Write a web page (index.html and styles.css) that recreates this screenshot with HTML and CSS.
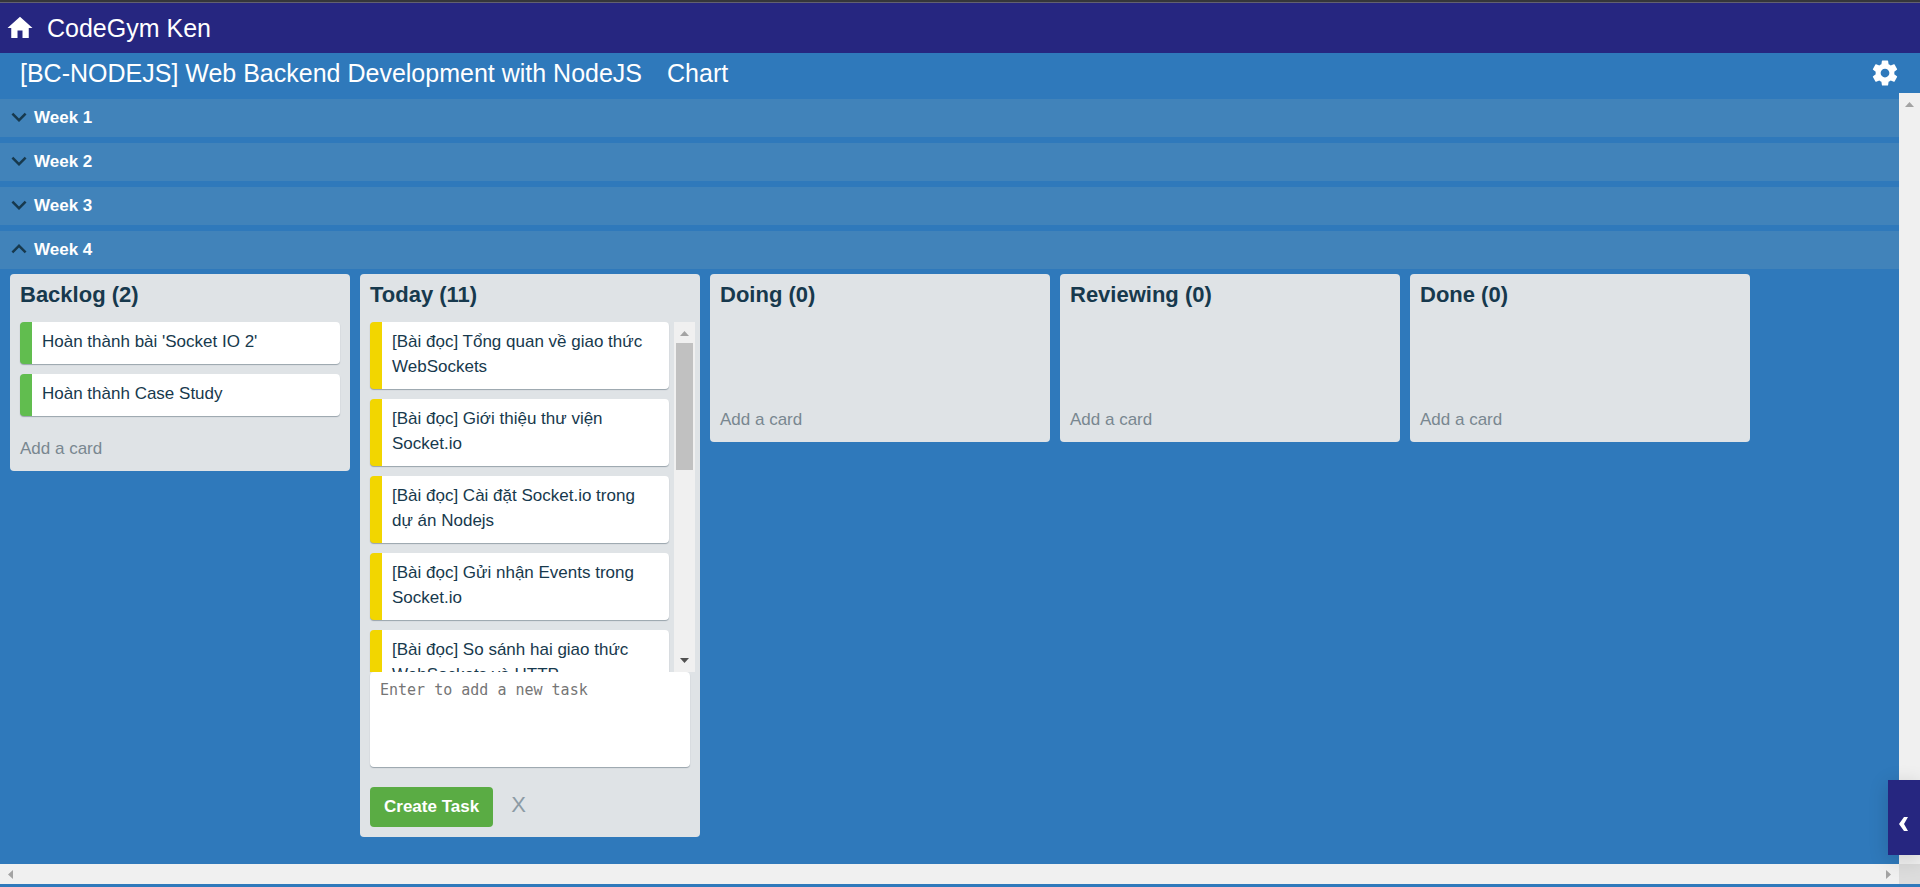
FILE: index.html
```html
<!DOCTYPE html>
<html lang="vi">
<head>
<meta charset="utf-8">
<meta name="viewport" content="width=device-width, initial-scale=1">
<title>CodeGym Ken</title>
<link rel="stylesheet" href="styles.css">
</head>
<body>
<svg class="sprite" width="0" height="0" aria-hidden="true">
  <symbol id="down" viewBox="0 0 24 24"><path d="M16.59 8.59L12 13.17 7.41 8.59 6 10l6 6 6-6z"/></symbol>
  <symbol id="up" viewBox="0 0 24 24"><path d="M12 8l-6 6 1.41 1.41L12 10.83l4.59 4.58L18 14z"/></symbol>
</svg>
<div class="app">
  <header class="topbar">
    <a class="home" href="#">
      <svg class="icon" viewBox="0 0 24 24" aria-hidden="true"><path d="M10 20v-6h4v6h5v-8h3L12 3 2 12h3v8z"/></svg>
      <span>CodeGym Ken</span>
    </a>
  </header>
  <nav class="boardbar">
    <a href="#">[BC-NODEJS] Web Backend Development with NodeJS</a>
    <a href="#">Chart</a>
    <button class="settings" type="button" aria-label="Settings">
      <svg class="icon" viewBox="0 0 24 24" aria-hidden="true"><path d="M19.43 12.98c.04-.32.07-.64.07-.98s-.03-.66-.07-.98l2.11-1.65c.19-.15.24-.42.12-.64l-2-3.46c-.12-.22-.39-.3-.61-.22l-2.49 1c-.52-.4-1.08-.73-1.69-.98l-.38-2.65C14.46 2.18 14.25 2 14 2h-4c-.25 0-.46.18-.49.42l-.38 2.65c-.61.25-1.17.59-1.69.98l-2.49-1c-.23-.09-.49 0-.61.22l-2 3.46c-.13.22-.07.49.12.64l2.11 1.65c-.04.32-.07.65-.07.98s.03.66.07.98l-2.11 1.65c-.19.15-.24.42-.12.64l2 3.46c.12.22.39.3.61.22l2.49-1c.52.4 1.08.73 1.69.98l.38 2.65c.03.24.24.42.49.42h4c.25 0 .46-.18.49-.42l.38-2.65c.61-.25 1.17-.59 1.69-.98l2.49 1c.23.09.49 0 .61-.22l2-3.46c.12-.22.07-.49-.12-.64l-2.11-1.65zM12 15.5c-1.93 0-3.5-1.57-3.5-3.5s1.57-3.5 3.5-3.5 3.5 1.57 3.5 3.5-1.57 3.5-3.5 3.5z"/></svg>
    </button>
  </nav>
  <div class="viewport">
    <main class="board">
      <div class="weeks">
        <button class="week" type="button" aria-expanded="false"><svg class="icon" aria-hidden="true"><use href="#down"/></svg>Week 1</button>
        <button class="week" type="button" aria-expanded="false"><svg class="icon" aria-hidden="true"><use href="#down"/></svg>Week 2</button>
        <button class="week" type="button" aria-expanded="false"><svg class="icon" aria-hidden="true"><use href="#down"/></svg>Week 3</button>
        <button class="week" type="button" aria-expanded="true"><svg class="icon" aria-hidden="true"><use href="#up"/></svg>Week 4</button>
      </div>
      <div class="lists">
        <section class="list">
          <h2>Backlog (2)</h2>
          <ul class="cards">
            <li class="card green">Hoàn thành bài 'Socket IO 2'</li>
            <li class="card green">Hoàn thành Case Study</li>
          </ul>
          <button class="add" type="button">Add a card</button>
        </section>
        <section class="list">
          <h2>Today (11)</h2>
          <div class="scroller">
            <ul class="cards">
              <li class="card yellow">[Bài đọc] Tổng quan về giao thức WebSockets</li>
              <li class="card yellow">[Bài đọc] Giới thiệu thư viện Socket.io</li>
              <li class="card yellow">[Bài đọc] Cài đặt Socket.io trong dự án Nodejs</li>
              <li class="card yellow">[Bài đọc] Gửi nhận Events trong Socket.io</li>
              <li class="card yellow">[Bài đọc] So sánh hai giao thức WebSockets và HTTP</li>
            </ul>
            <div class="vbar" aria-hidden="true">
              <svg class="arrow" viewBox="0 0 21 21"><path fill="#a3a3a3" d="M6 14h9l-4.500-5z"/></svg>
              <span class="thumb"></span>
              <svg class="arrow last" viewBox="0 0 21 21"><path fill="#505050" d="M6 7h9l-4.500 5z"/></svg>
            </div>
          </div>
          <form class="composer">
            <textarea aria-label="New task" placeholder="Enter to add a new task"></textarea>
            <div class="actions">
              <button class="create" type="button">Create Task</button>
              <button class="cancel" type="button" aria-label="Cancel">X</button>
            </div>
          </form>
        </section>
        <section class="list">
          <h2>Doing (0)</h2>
          <ul class="cards"></ul>
          <button class="add" type="button">Add a card</button>
        </section>
        <section class="list">
          <h2>Reviewing (0)</h2>
          <ul class="cards"></ul>
          <button class="add" type="button">Add a card</button>
        </section>
        <section class="list">
          <h2>Done (0)</h2>
          <ul class="cards"></ul>
          <button class="add" type="button">Add a card</button>
        </section>
      </div>
    </main>
    <div class="vbar" aria-hidden="true">
      <svg class="arrow" viewBox="0 0 21 21"><path fill="#a3a3a3" d="M6 14h9l-4.500-5z"/></svg>
    </div>
    <div class="hbar" aria-hidden="true">
      <svg class="arrow" viewBox="0 0 21 21"><path fill="#a3a3a3" d="M13 6v9l-5-4.500z"/></svg>
      <svg class="arrow" viewBox="0 0 21 21"><path fill="#a3a3a3" d="M8 6v9l5-4.500z"/></svg>
    </div>
    <div class="corner" aria-hidden="true"></div>
    <button class="drawer" type="button" aria-label="Open panel">
      <svg viewBox="0 0 10 14" width="10" height="14" aria-hidden="true"><path d="M5 0h4L5 7l4 7H5L0 7z"/></svg>
    </button>
  </div>
</div>
</body>
</html>
```
FILE: styles.css
```css
* { box-sizing: border-box; }

body {
  margin: 0;
  background: #2f79bb;
  color: #17394d;
  font-family: "Liberation Sans", Arial, sans-serif;
  font-size: 17px;
  line-height: 25px;
}

button {
  border: 0;
  padding: 0;
  background: none;
  color: inherit;
  font: inherit;
  text-align: left;
  cursor: pointer;
}

a { color: inherit; text-decoration: none; }

.sprite { position: absolute; }

.icon {
  display: block;
  flex: none;
  width: 30px;
  height: 30px;
  fill: currentColor;
}

.app {
  display: flex;
  flex-direction: column;
  height: 100vh;
  padding-bottom: 3px;
  border-top: 2px solid #35363a;
}

.topbar {
  flex: none;
  border-top: 1px solid #62606f;
  padding: 10px 5px;
  background: #262680;
  color: #fff;
  font-size: 25px;
  line-height: 30px;
}

.home { display: inline-flex; gap: 12px; vertical-align: top; }

.boardbar {
  display: flex;
  flex: none;
  align-items: center;
  gap: 25px;
  padding: 5px 20px;
  color: #fff;
  font-size: 25px;
  line-height: 30px;
}

.settings { margin-left: auto; }

.viewport {
  position: relative;
  display: grid;
  flex: 1;
  grid-template-columns: minmax(0, 1fr) 21px;
  grid-template-rows: minmax(0, 1fr) 20px;
  min-height: 0;
}

.board {
  overflow: auto;
  padding-top: 6px;
  scrollbar-width: none;
}

.weeks { display: grid; gap: 6px; }

.week {
  display: flex;
  align-items: center;
  height: 38px;
  padding: 0 0 2px 4px;
  background: #4183ba;
  color: #fff;
  font-weight: bold;
}

.week .icon { color: #17394d; }

.lists {
  display: flex;
  align-items: flex-start;
  gap: 10px;
  padding: 5px 10px 10px;
}

.list {
  flex: none;
  width: 340px;
  border-radius: 4px;
  background: #dfe3e6;
}

.list h2 {
  margin: 0;
  padding: 7px 10px 13px;
  font-size: 22px;
  line-height: 28px;
}

.cards {
  display: grid;
  align-content: start;
  gap: 10px;
  min-height: 75px;
  margin: 0;
  padding: 0 10px 10px;
  list-style: none;
}

.card {
  padding: 7px 10px 10px;
  border-left: 12px solid;
  border-radius: 4px;
  background: #fff;
  box-shadow: 0 1px 1px #98a3ab;
}

.green { border-color: #61bd4f; }
.yellow { border-color: #f2d600; }

.add {
  display: block;
  width: 100%;
  padding: 10px;
  color: #798790;
}

.scroller {
  display: grid;
  grid-template-columns: minmax(0, 1fr) 21px;
  height: 350px;
  padding-right: 5px;
}

.scroller .cards {
  overflow: auto;
  padding-right: 5px;
  scrollbar-width: none;
}

.vbar {
  display: flex;
  flex-direction: column;
  align-items: center;
  background: #f0f0f0;
}

.arrow { display: block; flex: none; width: 21px; height: 21px; }
.arrow.last { margin-top: auto; }
.thumb { width: 17px; height: 127px; background: #c1c1c1; }

.hbar {
  display: flex;
  align-items: center;
  justify-content: space-between;
  overflow: hidden;
  background: #f0f0f0;
}

.corner { background: #dcdcdc; }

.composer { padding: 0 10px 10px; }

.composer textarea {
  display: block;
  width: 100%;
  height: 95px;
  padding: 6px 10px;
  border: 0;
  border-radius: 4px;
  background: #fff;
  box-shadow: 0 1px 1px #98a3ab;
  font-family: "DejaVu Sans Mono", monospace;
  font-size: 15px;
  line-height: 24px;
  resize: none;
}

.composer textarea::placeholder { color: #757575; }

.actions {
  display: flex;
  align-items: center;
  gap: 18px;
  margin-top: 20px;
}

.create {
  padding: 7px 14px 8px;
  border-radius: 4px;
  background: #5aac44;
  color: #fff;
  font-weight: bold;
}

.cancel { padding-bottom: 5px; color: #8c9ba5; font-size: 22px; }

.drawer {
  position: absolute;
  right: 0;
  bottom: 29px;
  display: flex;
  justify-content: center;
  width: 32px;
  height: 75px;
  padding-top: 37px;
  background: #262680;
  box-shadow: 0 4px 20px rgba(0, 0, 0, 0.16);
  fill: #fff;
}
```
